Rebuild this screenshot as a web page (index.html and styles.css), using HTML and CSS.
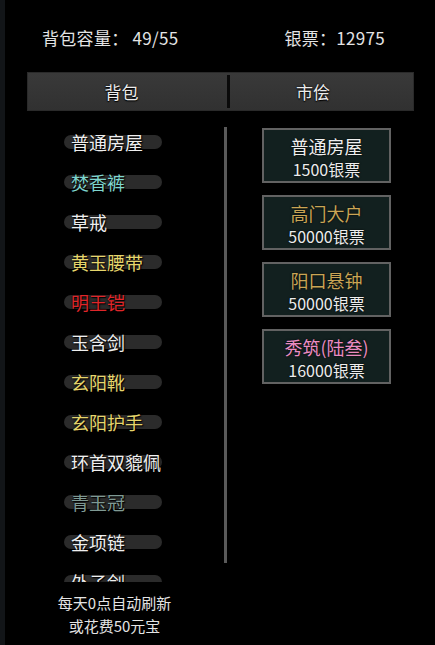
FILE: index.html
```html
<!DOCTYPE html>
<html lang="zh">
<head>
    <meta charset="UTF-8">
    <meta name="viewport" content="width=device-width, initial-scale=1.0">
    <title>背包</title>
    <link rel="stylesheet" href="styles.css">
</head>
<body>
    <div class="page">
        <div class="top">
            <span>背包容量：&nbsp;49/55</span>
            <span>银票：12975</span>
        </div>
        <div class="tabs">
            <div class="tab tab-left">背包</div>
            <div class="tab-divider"></div>
            <div class="tab tab-right">市侩</div>
        </div>
        <div class="main">
            <div class="left">
                <div class="bag-list">
                    <div class="bag-item"><div class="pill"><span class="c-white">普通房屋</span></div></div>
                    <div class="bag-item"><div class="pill"><span class="c-cyan">焚香裤</span></div></div>
                    <div class="bag-item"><div class="pill"><span class="c-white">草戒</span></div></div>
                    <div class="bag-item"><div class="pill"><span class="c-yellow">黄玉腰带</span></div></div>
                    <div class="bag-item"><div class="pill"><span class="c-red">明王铠</span></div></div>
                    <div class="bag-item"><div class="pill"><span class="c-white">玉含剑</span></div></div>
                    <div class="bag-item"><div class="pill"><span class="c-yellow">玄阳靴</span></div></div>
                    <div class="bag-item"><div class="pill"><span class="c-yellow">玄阳护手</span></div></div>
                    <div class="bag-item"><div class="pill"><span class="c-white">环首双貔佩</span></div></div>
                    <div class="bag-item"><div class="pill"><span class="c-grey">青玉冠</span></div></div>
                    <div class="bag-item"><div class="pill"><span class="c-white">金项链</span></div></div>
                    <div class="bag-item"><div class="pill"><span class="c-white">外子剑</span></div></div>
                </div>
                <div class="refresh">每天0点自动刷新<br>或花费50元宝</div>
            </div>
            <div class="scrollbar"></div>
            <div class="shop">
                <div class="card">
                    <div class="card-title c-white">普通房屋</div>
                    <div class="card-price">1500银票</div>
                </div>
                <div class="card">
                    <div class="card-title c-gold">高门大户</div>
                    <div class="card-price">50000银票</div>
                </div>
                <div class="card">
                    <div class="card-title c-gold">阳口悬钟</div>
                    <div class="card-price">50000银票</div>
                </div>
                <div class="card">
                    <div class="card-title c-pink">秀筑(陆叁)</div>
                    <div class="card-price">16000银票</div>
                </div>
            </div>
        </div>
    </div>
</body>
</html>
```

FILE: styles.css
```css
* {
    margin: 0;
    padding: 0;
    box-sizing: border-box;
}

body {
    font-family: "Noto Sans CJK SC", "Noto Sans", sans-serif;
    background-color: #000;
    color: #e8e8e8;
}

.page {
    width: 435px;
    height: 645px;
    border-left: 5px solid #121518;
    overflow: hidden;
}

.top {
    display: flex;
    justify-content: space-between;
    height: 72px;
    padding: 26px 50px 0 37px;
    font-size: 17px;
    line-height: 24px;
    letter-spacing: 0.3px;
    color: #e4e4e4;
}

.tabs {
    display: flex;
    align-items: center;
    height: 39px;
    margin: 0 21px 0 22px;
    background: linear-gradient(#393939, #313131);
    border: 1px solid #2a2a2a;
}

.tab {
    text-align: center;
    font-size: 17px;
    color: #ececec;
    text-shadow: 0 0 2px #000, 0 1px 1px #000;
}

.tab-left {
    width: 199px;
    padding-right: 12px;
}

.tab-right {
    flex: 1;
    padding-right: 17px;
}

.tab-divider {
    width: 3px;
    height: 33px;
    background-color: #0a0a0a;
}

.main {
    display: flex;
    margin-top: 11px;
}

.left {
    width: 219px;
}

.bag-list {
    height: 460px;
    overflow: hidden;
}

.bag-item {
    display: flex;
    align-items: center;
    height: 40px;
    padding-left: 59px;
}

.pill {
    display: flex;
    align-items: center;
    width: 98px;
    height: 14px;
    border-radius: 7px;
    background-color: #2b2b2b;
    white-space: nowrap;
}

.pill span {
    padding-left: 7px;
    font-size: 18px;
    text-shadow: 0 0 2px #000, 1px 1px 1px #000;
}

.c-white { color: #efefef; }
.c-cyan { color: #7fd6cf; }
.c-yellow { color: #e6d66c; }
.c-red { color: #e0262a; }
.c-grey { color: #7f9a94; }
.c-gold { color: #c9a555; }
.c-pink { color: #ea8cc2; }

.refresh {
    padding-top: 9px;
    text-align: center;
    font-size: 15px;
    line-height: 23px;
    color: #e4e4e4;
}

.scrollbar {
    width: 3px;
    height: 436px;
    margin-top: 5px;
    background-color: #5a5a5a;
}

.shop {
    display: flex;
    flex-direction: column;
    gap: 12px;
    padding: 6px 0 0 35px;
}

.card {
    width: 129px;
    height: 55px;
    border: 2px solid #626262;
    background-color: #12201f;
    text-align: center;
    padding-top: 4px;
}

.card-title {
    font-size: 18px;
    line-height: 25px;
    text-shadow: 0 0 2px #000;
}

.card-price {
    font-size: 16px;
    line-height: 20px;
    color: #ececec;
    text-shadow: 0 0 2px #000;
}
```
